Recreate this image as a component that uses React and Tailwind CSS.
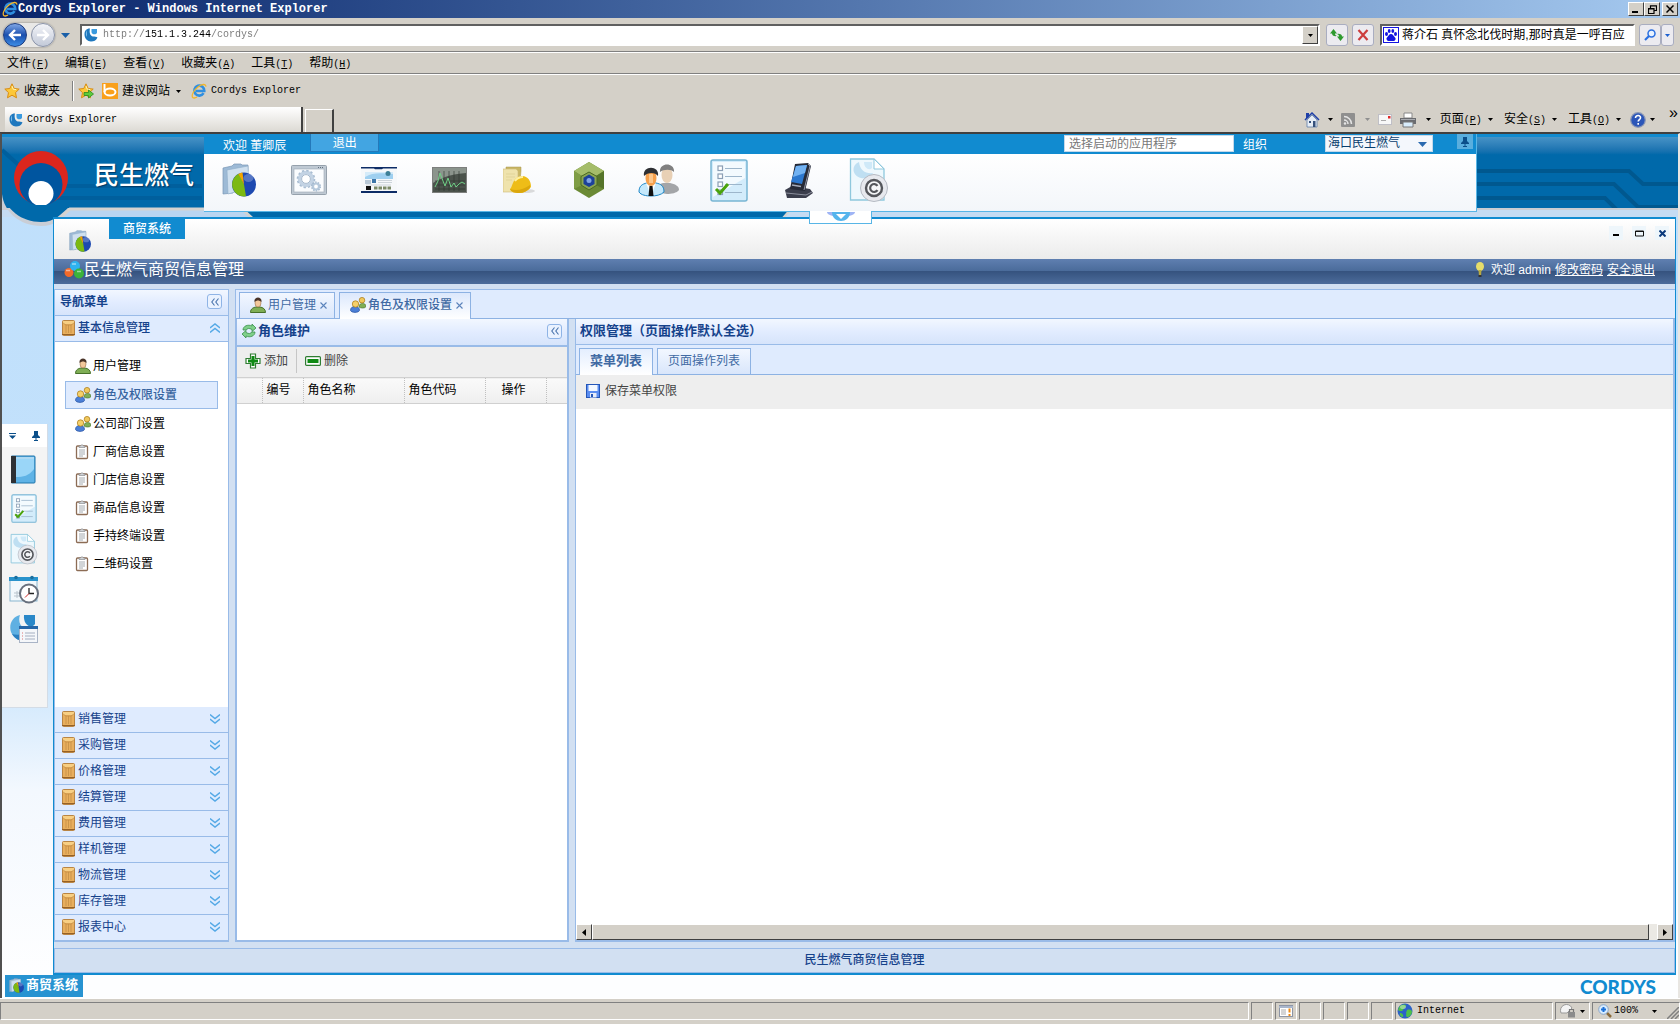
import { useState } from "react";
import clsx from "clsx";

const menus = [
  ["文件", "F"],
  ["编辑", "E"],
  ["查看", "V"],
  ["收藏夹", "A"],
  ["工具", "T"],
  ["帮助", "H"],
];

const navItems = [
  { label: "用户管理", icon: UserIcon },
  { label: "角色及权限设置", icon: UsersIcon },
  { label: "公司部门设置", icon: UsersIcon },
  { label: "厂商信息设置", icon: ClipIcon },
  { label: "门店信息设置", icon: ClipIcon },
  { label: "商品信息设置", icon: ClipIcon },
  { label: "手持终端设置", icon: ClipIcon },
  { label: "二维码设置", icon: ClipIcon },
];

const sections = [
  "销售管理",
  "采购管理",
  "价格管理",
  "结算管理",
  "费用管理",
  "样机管理",
  "物流管理",
  "库存管理",
  "报表中心",
];

const launchers = [
  { name: "folder", icon: <FolderPie className="w-[34px] h-[34px]" /> },
  { name: "settings", icon: <GearWindow /> },
  { name: "portal", icon: <PortalIcon /> },
  { name: "monitor", icon: <MonitorIcon /> },
  { name: "worker", icon: <HelmetIcon /> },
  { name: "hexagon", icon: <HexIcon /> },
  { name: "people", icon: <PeopleIcon /> },
  { name: "checklist", icon: <ChecklistIcon className="w-[38px] h-[43px]" /> },
  { name: "pda", icon: <PdaIcon /> },
  { name: "copyright", icon: <CopyrightIcon className="w-[40px] h-[46px]" /> },
];

/* ---------- small glyphs ---------- */

function Caret({ className = "fill-black" }) {
  return (
    <svg viewBox="0 0 5 3" className={clsx("w-[5px] h-[3px] shrink-0", className)}>
      <path d="M0 0h5L2.5 3z" />
    </svg>
  );
}

function IeIcon() {
  return (
    <svg viewBox="0 0 16 16" className="w-4 h-4 shrink-0">
      <path d="M12.6 10.2A5 5 0 1 1 13.3 8H5" fill="none" stroke="#2f8fe0" strokeWidth="2.6" />
      <path d="M14.8 3.6C15 .8 11 .8 7 4 3 7.200 .6 11.500 1.400 14c.7 1.500 3 1 4.600 0" fill="none" stroke="#f3b62b" strokeWidth="1.400" />
    </svg>
  );
}

function CordysIcon() {
  return (
    <svg viewBox="0 0 14 14" className="w-[14px] h-[14px] shrink-0">
      <path d="M6 .5C2 .5 .5 3 .5 6.500c0 4 3 7 6.500 7 3 0 5-1 6.500-4-1-1-3-1-4.500-1C6 8 5 4 6 .5z" fill="#1f78be" />
      <path d="M3 2C1.500 4 1.500 7 3 9c0-3-.5-5 0-7z" fill="#8cc8f0" />
      <path d="M7.500 1h5.500v3.500C13 7 7.500 7 7.500 4z" fill="#3a9ade" />
    </svg>
  );
}

function StarIcon({ add }) {
  return (
    <svg viewBox="0 0 16 16" className="w-4 h-4 shrink-0">
      <path d="M8 .8l2.200 4.700 5 .6-3.700 3.500 1 5.200L8 12.200l-4.500 2.600 1-5.200L.8 6.100l5-.6z" fill="#fcc83a" stroke="#d98c12" />
      <path d="M8 3l1.200 3.200 3 .4" fill="none" stroke="#fff3b5" />
      {add && <path d="M6 9.500h4.500V7l5 4-5 4v-2.500H6z" fill="#5ccb3d" stroke="#2b8a1c" strokeWidth=".8" />}
    </svg>
  );
}

function Pin({ className }) {
  return (
    <svg viewBox="0 0 8 10" className={clsx("w-2 h-[10px]", className)}>
      <path d="M2 0h4v4l2 2v1H4.500v2H6v1H2V9h1.500V7H0V6l2-2z" fill="#0b4f8a" />
    </svg>
  );
}

function FolderPie({ className }) {
  return (
    <svg viewBox="0 0 34 34" className={className}>
      <path d="M1 5l9-2 2-2h7l1 1h6v6L11 30 1 31z" fill="#9dbad6" stroke="#7897b5" strokeWidth=".7" />
      <path d="M5 7l21-4 1 22-21 6z" fill="#cfe0ef" stroke="#8facc8" strokeWidth=".6" />
      <circle cx="22" cy="21.500" r="12" fill="#1d49b0" />
      <path d="M22 21.500L17 10.600a12 12 0 0 0 7 22.700z" fill="#7cb912" />
      <path d="M22 21.500L16.500 10.900a12 12 0 0 1 4-1.300z" fill="#f5a400" />
      <ellipse cx="26.500" cy="15" rx="5" ry="4" fill="#fff" opacity=".25" />
    </svg>
  );
}

function GearWindow() {
  return (
    <svg viewBox="0 0 36 31" className="w-9 h-[31px]">
      <rect x=".5" y=".5" width="35" height="29" rx="1" fill="#bfc9d3" stroke="#96a1ac" />
      <rect x="3" y="4" width="30" height="23" fill="#fafcfe" stroke="#9aa6b2" strokeWidth=".6" />
      <path d="M27 2.500h6" stroke="#63717f" strokeDasharray="1 1" />
      <circle cx="15" cy="14" r="6.500" fill="none" stroke="#c3d3e4" strokeWidth="3.500" />
      <circle cx="15" cy="14" r="8.500" fill="none" stroke="#a9bdd2" strokeWidth="1.600" strokeDasharray="2.400 2.050" />
      <circle cx="15" cy="14" r="4.400" fill="#fff" stroke="#94aac0" strokeWidth=".8" />
      <circle cx="25" cy="21.500" r="3" fill="#fff" stroke="#b6c9dc" strokeWidth="2.200" />
      <circle cx="25" cy="21.500" r="4.400" fill="none" stroke="#9fb5cb" strokeWidth="1.200" strokeDasharray="1.500 1.260" />
    </svg>
  );
}

function PortalIcon() {
  return (
    <svg viewBox="0 0 36 26" className="w-9 h-[26px]">
      <rect width="36" height="26" fill="#f6f8fa" />
      <path d="M0 0h36v1.500H22l-1 .8h-7l-1-.8H0z" fill="#0d2c66" />
      <path d="M0 24h36v2H0z" fill="#0d2c66" />
      <rect x="4" y="5" width="28" height="7" fill="#9fd0f0" />
      <path d="M4 10c8-5 16-4 28-3v-2H4z" fill="#d5ebf9" />
      <circle cx="27" cy="6.500" r="2.500" fill="#3d7f96" />
      <rect x="4" y="13" width="6" height="4" fill="#b8c8d6" />
      <rect x="11" y="12" width="4" height="4" fill="#3e76a8" />
      <path d="M17 13.500h14M17 15.500h14M5 18h25" stroke="#cdd4da" />
      <rect x="5" y="19" width="5" height="4" fill="#111" />
      <path d="M13 21h17" stroke="#7c8a68" strokeWidth="3" strokeDasharray="3.500 1" />
    </svg>
  );
}

function MonitorIcon() {
  return (
    <svg viewBox="0 0 35 26" className="w-[35px] h-[26px]">
      <rect x=".5" y=".5" width="34" height="25" fill="#4b534c" stroke="#7d7f7d" />
      <path d="M1 1h33v5C22 7 12 9 1 16z" fill="#8b948c" />
      <path d="M3 18h30M3 14h30M3 22h30M7 4v20M12 4v20M17 4v20M22 4v20M27 4v20" stroke="#2b332c" strokeWidth=".6" />
      <path d="M3 20l3-6 2-8 3 8 2 5 3-8 3 9 3-4 2 4 3-3 3-2 3 2" fill="none" stroke="#6fcf86" />
    </svg>
  );
}

function HelmetIcon() {
  return (
    <svg viewBox="0 0 32 28" className="w-8 h-7">
      <path d="M3 1h15v4l-2 20H3z" fill="#c9b766" stroke="#a8964c" strokeWidth=".5" />
      <path d="M0 3h13l2 2v20l-3 1H0z" fill="#efe3ad" stroke="#cdbb75" strokeWidth=".6" />
      <path d="M3 8h9M3 11h9M3 14h6" stroke="#dccd94" strokeWidth=".7" />
      <ellipse cx="22" cy="25" rx="10" ry="2" fill="#d9dadb" />
      <path d="M7 23c3-2 2-12 12-13 6 0 9 5 9 11-3 4-7 6-12 6-4 0-8-1-9-4z" fill="#eebd17" />
      <path d="M7 23c6 2 13 1 20-4v3c-3 3-7 5-11 5-4 0-8-1-9-4z" fill="#dba70c" />
      <path d="M12 15c2-3 5-4 8-4" fill="none" stroke="#fff0a0" strokeWidth="2" />
    </svg>
  );
}

function HexIcon() {
  return (
    <svg viewBox="0 0 30 36" className="w-[30px] h-9">
      <path d="M15 0l15 9v18l-15 9L0 27V9z" fill="#6b8a35" />
      <path d="M15 0l15 9-8 5-7-4-7 4-8-5z" fill="#a5bd6a" />
      <path d="M0 9l8 5v9l-8 4z" fill="#7f9d45" />
      <path d="M30 9l-8 5v9l8 4z" fill="#55742a" />
      <path d="M15 10l8 4.500v8.500l-8 5-8-5v-8.500z" fill="#8aa652" stroke="#4c6a22" />
      <path d="M15 12.500l5.500 3.200v6.200L15 25l-5.500-3.100v-6.200z" fill="#1d4199" />
      <circle cx="15" cy="18.500" r="2.500" fill="#7fa3e8" />
    </svg>
  );
}

function PeopleIcon() {
  return (
    <svg viewBox="0 0 42 33" className="w-[42px] h-[33px]">
      <path d="M17 28c0-6 4-8 8-9h7c5 1 9 3 9 7-2 3-8 4-12 4z" fill="#a3a5a8" />
      <ellipse cx="29" cy="11" rx="5.500" ry="8" fill="#e8d0b5" />
      <path d="M22 8c-1-10 15-10 14 0-3-3-10-3-14 0z" fill="#808080" />
      <path d="M1 28c0-6 3-8 8-9h9c5 1 8 3 8 9-3 3-8 4-13 4S3 31 1 28z" fill="#c4e8fb" stroke="#1d87c8" />
      <path d="M8 19l5 4 5-4-5 13z" fill="#fff" />
      <path d="M11.500 22h3l1 10h-5z" fill="#111" />
      <ellipse cx="13" cy="14" rx="5.500" ry="8" fill="#f6a04c" />
      <path d="M11 10h4v9h-4z" fill="#ffd7a8" opacity=".7" />
      <path d="M6 12C4 1 22 1 20 12c-3-4-10-4-14 0z" fill="#2d2f33" />
    </svg>
  );
}

function ChecklistIcon({ className }) {
  return (
    <svg viewBox="0 0 38 43" className={className}>
      <rect x="1" y="1" width="36" height="41" rx="2" fill="#d3ecfb" stroke="#78b5d3" strokeWidth="1.500" />
      <path d="M3 3h32v16L3 38z" fill="#f3fafe" />
      <g fill="#fff" stroke="#8b9fb5" strokeWidth="1.200">
        <rect x="8" y="7" width="4.500" height="4.500" />
        <rect x="8" y="15" width="4.500" height="4.500" />
        <rect x="8" y="23" width="4.500" height="4.500" />
        <rect x="8" y="31" width="4.500" height="4.500" />
      </g>
      <path d="M15 9.500h17M15 17.500h17M15 25.500h17M15 33.500h17" stroke="#9db6cb" strokeWidth="1.200" />
      <path d="M6 30l4 4 8-9" fill="none" stroke="#4aa40c" strokeWidth="3" />
    </svg>
  );
}

function PdaIcon() {
  return (
    <svg viewBox="0 0 30 35" className="w-[30px] h-[35px]">
      <path d="M1 27l7-4 18 3 3 4-7 5H3z" fill="#3b3e4c" />
      <path d="M2 30l20 2 6-3" fill="none" stroke="#8b8f9c" />
      <path d="M11 1l13-1 3 3-6 25-15-2z" fill="#262a36" />
      <path d="M12 3l11-1-5 19-11-2z" fill="#2c78cf" />
      <path d="M12 3l11-1-2 8-12 4z" fill="#72b2f2" />
      <path d="M8 22l9 1.500" stroke="#a3a9b8" strokeWidth="1.500" />
      <path d="M24 1l2 2-6 24" fill="none" stroke="#9297a8" />
    </svg>
  );
}

function CopyrightIcon({ className }) {
  return (
    <svg viewBox="0 0 40 46" className={className}>
      <path d="M1.500 2H25l10 10v31H1.500z" fill="#eef8fd" stroke="#8fc8dd" strokeWidth="1.300" />
      <path d="M25 2v10h10z" fill="#fff" stroke="#8fc8dd" />
      <path d="M10 5c-8 3-7 14 2 16 5 1 10-1 12-5-7 1-13-2-14-11z" fill="#bfdff2" />
      <path d="M15 5h8v6c-3 3-8 0-8-6z" fill="#cfe9f8" />
      <circle cx="25" cy="31" r="13.500" fill="#e7e9ee" stroke="#b6bac3" />
      <circle cx="25" cy="31" r="8" fill="#f5f6f8" stroke="#55575c" strokeWidth="2.400" />
      <path d="M28.500 28.800a4 4 0 1 0 0 4.400" fill="none" stroke="#55575c" strokeWidth="2.200" />
    </svg>
  );
}

function BookIcon() {
  return (
    <svg viewBox="0 0 25 29" className="w-[25px] h-[29px]">
      <rect x="0" y="1" width="24" height="27" rx="1" fill="#5fb3e6" stroke="#1e75ab" />
      <path d="M5 4h18v10c-5 7-11 8-18 8z" fill="#9ad6f8" />
      <path d="M0 1h5v27H0z" fill="#2d3034" />
      <path d="M5 3h18" stroke="#fff" />
    </svg>
  );
}

function CalendarIcon() {
  return (
    <svg viewBox="0 0 30 29" className="w-[30px] h-[29px]">
      <rect x="1" y="3" width="27" height="23" fill="#f2f8fc" stroke="#8ab6cf" />
      <path d="M0 2h29v4H0z" fill="#2a93cc" />
      <circle cx="7" cy="2.500" r="1.800" fill="#1a6f9f" />
      <circle cx="23" cy="2.500" r="1.800" fill="#1a6f9f" />
      <path d="M5 18h8M5 21h8M8 16v7" stroke="#b8c3cc" />
      <circle cx="20" cy="18.500" r="9" fill="#fff" stroke="#68707d" strokeWidth="2" />
      <path d="M20 13v5.500h5" fill="none" stroke="#222" strokeWidth="1.300" />
      <path d="M20 18.500l-4 4" stroke="#d02a2a" />
    </svg>
  );
}

function CordysDocIcon() {
  return (
    <svg viewBox="0 0 30 31" className="w-[30px] h-[31px]">
      <path d="M11 1C2 3-1 13 3 20c3 5 8 7 12 7V14c-4-2-6-7-4-13z" fill="#5fb0e2" />
      <path d="M3 20c3 5 8 7 12 7v-7c-5 1-9 1-12 0z" fill="#2b7fc0" />
      <path d="M15 1h11v9c-3 5-12 2-11-9z" fill="#2b88c8" />
      <rect x="10.500" y="12.500" width="18" height="16" fill="#f5f7fa" stroke="#a9b4c6" />
      <path d="M10 12h19v3H10z" fill="#2767a8" />
      <path d="M16 19h10M16 22h10M16 25h10" stroke="#a4aec0" />
      <path d="M13 19h1M13 22h1M13 25h1" stroke="#d77" />
    </svg>
  );
}

function UserIcon() {
  return (
    <svg viewBox="0 0 16 16" className="w-4 h-4 shrink-0">
      <path d="M.5 15.500c0-4 3-5 5.500-5.500h4c3 .5 5.500 2 5.500 5.500z" fill="#7fae55" stroke="#46702a" />
      <ellipse cx="8" cy="6" rx="3" ry="4" fill="#f3c89b" stroke="#9b6e43" strokeWidth=".6" />
      <path d="M4.500 5C3.500-1 12.500-1 11.500 5c-2-2-5-2-7 0z" fill="#4a3428" />
    </svg>
  );
}

function UsersIcon() {
  return (
    <svg viewBox="0 0 16 16" className="w-4 h-4 shrink-0">
      <path d="M9 10c0-3 2-3.500 3.500-3.500S16 7 16 9.500c-1 2-5 2-7 .5z" fill="#7fae55" stroke="#46702a" strokeWidth=".6" />
      <circle cx="12" cy="3.200" r="2.800" fill="#f0c85c" stroke="#a87713" strokeWidth=".7" />
      <path d="M.5 13.500c0-3 2-4 4.500-4s4.500 1 4.500 4c-1 2.500-8 2.500-9 0z" fill="#4b7fd6" stroke="#234f9f" strokeWidth=".7" />
      <circle cx="5.500" cy="7" r="3.200" fill="#f5d06a" stroke="#a87713" strokeWidth=".7" />
    </svg>
  );
}

function ClipIcon() {
  return (
    <svg viewBox="0 0 16 16" className="w-4 h-4 shrink-0">
      <rect x="1.500" y="2" width="11" height="12.500" rx="1" fill="#fff" stroke="#8c6c55" strokeWidth="1.300" />
      <path d="M4 3.500V2h1.500l1.500-1.500 1.500 1.500H10v1.500z" fill="#cfd3d6" stroke="#808285" strokeWidth=".6" />
      <path d="M4 6h6M4 8h6M4 10h6M4 12h4" stroke="#9aa0a6" strokeWidth=".9" />
    </svg>
  );
}

function FolderTan() {
  return (
    <svg viewBox="0 0 13 16" className="w-[13px] h-4 shrink-0">
      <rect x=".5" y=".5" width="12" height="15" rx="1" fill="#e8ae5c" stroke="#b98544" />
      <path d="M1 1h11v3H1z" fill="#f8cf83" />
      <path d="M1 3l3 2h5l3-2M6.500 5v8M4 5v8M9 5v8" fill="none" stroke="#bf8a42" strokeWidth=".7" />
      <path d="M0 14.500h13" stroke="#966126" />
    </svg>
  );
}

function Chevrons({ up }) {
  return (
    <svg viewBox="0 0 10 10" className={clsx("w-[10px] h-[10px]", up && "rotate-180")}>
      <path d="M0 .5l5 4 5-4M0 5l5 4 5-4" fill="none" stroke="#55a9e6" strokeWidth="1.400" />
    </svg>
  );
}

function CollapseButton() {
  return (
    <button aria-label="collapse" className="grid place-items-center w-[15px] h-[15px] rounded-[3px] border border-[#8fb4e6] bg-[#eaf2ff]">
      <svg viewBox="0 0 8 8" className="w-2 h-2">
        <path d="M3.500 0.500L.8 4l2.700 3.500M7.500 .5L4.800 4l2.700 3.500" fill="none" stroke="#4a74ad" strokeWidth="1.100" />
      </svg>
    </button>
  );
}

function Latin({ children, className }) {
  return <span className={clsx("font-['Liberation_Mono',monospace] text-[10px]", className)}>{children}</span>;
}

function MenuLabel({ text, hotkey }) {
  return (
    <>
      {text}
      <Latin>
        (<u>{hotkey}</u>)
      </Latin>
    </>
  );
}

const bevel = "bg-[#d4d0c8] border border-t-white border-l-white border-r-[#404040] border-b-[#404040]";
const navButton = "grid place-items-center h-[22px] rounded-[3px] border border-[#a9adc0] bg-[#ecebf0]";

/* ---------- browser chrome ---------- */

function BrowserChrome() {
  return (
    <div className="bg-[#d4d0c8]">
      <div className="flex items-center h-[18px] pl-0.5 pr-0.5 bg-linear-to-r from-[#0a246a] to-[#a6caf0]">
        <IeIcon />
        <span className="flex-1 font-['Liberation_Mono',monospace] font-bold text-xs text-white">
          Cordys Explorer - Windows Internet Explorer
        </span>
        <button aria-label="minimize" className={clsx("grid place-items-center w-4 h-[14px]", bevel)}>
          <svg viewBox="0 0 8 8" className="w-2 h-2"><path d="M0 7h6" stroke="#000" strokeWidth="2" /></svg>
        </button>
        <button aria-label="restore" className={clsx("grid place-items-center w-4 h-[14px]", bevel)}>
          <svg viewBox="0 0 9 9" className="w-[9px] h-[9px]">
            <path d="M2.500 3V.8h6v4.700H6.500M.5 3.500h5.500v5H.5zM.5 4h5.500" fill="none" stroke="#000" strokeWidth="1.200" />
          </svg>
        </button>
        <button aria-label="close" className={clsx("grid place-items-center ml-0.5 w-4 h-[14px]", bevel)}>
          <svg viewBox="0 0 8 8" className="w-2 h-2"><path d="M.5.5l7 7M7.500.5l-7 7" stroke="#000" strokeWidth="1.500" /></svg>
        </button>
      </div>

      <div className="flex items-center h-[35px] pl-[3px] pr-[6px] border-b border-white shadow-[inset_0_-1px_0_#808080]">
        <div className="flex gap-1 rounded-full bg-[#e9e8e6] shadow-[0_0_2px_#777]">
          <button aria-label="back" className="grid place-items-center w-6 h-6 rounded-full border border-[#1b3a7c] bg-linear-to-b from-[#7fa6e6] via-[#1a4fae] to-[#3f8ee6]">
            <svg viewBox="0 0 14 12" className="w-[14px] h-3"><path d="M13 6H2M7 1L2 6l5 5" fill="none" stroke="#fff" strokeWidth="2.400" /></svg>
          </button>
          <button aria-label="forward" className="grid place-items-center w-6 h-6 rounded-full border border-[#8a93a8] bg-linear-to-b from-[#f3f4f8] to-[#c3cad9]">
            <svg viewBox="0 0 14 12" className="w-[14px] h-3"><path d="M1 6h11M7 1l5 5-5 5" fill="none" stroke="#fff" strokeWidth="2.400" /></svg>
          </button>
        </div>
        <svg viewBox="0 0 9 5" className="ml-1.5 w-[9px] h-[5px]"><path d="M0 0h9L4.500 5z" fill="#1a5fa8" /></svg>
        <div className="flex flex-1 items-center h-[22px] ml-[10px] pl-0.5 bg-white border-2 border-t-[#606060] border-l-[#606060] border-r-white border-b-white">
          <CordysIcon />
          <input
            aria-label="address"
            defaultValue="http://151.1.3.244/cordys/"
            className="flex-1 ml-[5px] outline-none font-['Liberation_Mono',monospace] text-[10px] text-transparent bg-clip-text bg-[linear-gradient(90deg,#777_42px,#000_42px,#000_108px,#777_108px)]"
          />
          <button aria-label="history" className={clsx("grid place-items-center w-4 h-[18px]", bevel)}>
            <Caret />
          </button>
        </div>
        <button aria-label="refresh" className={clsx("ml-1.5 w-[22px]", navButton)}>
          <svg viewBox="0 0 14 12" className="w-[14px] h-3">
            <path d="M0 4.500L3.500 0 7 4.500H5c0 1 .5 2 2 2.500-3 .5-5-.5-5-2.500z" fill="#2e9a2e" />
            <path d="M14 7.500L10.500 12 7 7.500h2c0-1-.5-2-2-2.500 3-.5 5 .5 5 2.500z" fill="#2e9a2e" />
          </svg>
        </button>
        <button aria-label="stop" className={clsx("ml-1 w-[22px]", navButton)}>
          <svg viewBox="0 0 12 12" className="w-3 h-3"><path d="M1.500 1l9 10M10.500 1l-9 10" stroke="#cc3d3d" strokeWidth="2.200" /></svg>
        </button>
        <div className="flex items-center w-[255px] h-[22px] ml-1.5 pl-px bg-white border-2 border-t-[#606060] border-l-[#606060] border-r-white border-b-white">
          <svg viewBox="0 0 16 16" className="w-4 h-4 shrink-0">
            <rect x=".5" y=".5" width="15" height="15" fill="#fff" stroke="#1414e0" />
            <g fill="#1414e0">
              <ellipse cx="3.500" cy="7" rx="1.500" ry="2" />
              <ellipse cx="6.200" cy="4" rx="1.400" ry="2" />
              <ellipse cx="9.800" cy="4" rx="1.400" ry="2" />
              <ellipse cx="12.500" cy="7" rx="1.500" ry="2" />
              <path d="M8 7c2 0 2.500 2 4 3.500s0 3.500-1.500 3.500-4 0-5 0-3-2-1.500-3.500S6 7 8 7z" />
            </g>
          </svg>
          <input
            aria-label="search"
            defaultValue="蒋介石 真怀念北伐时期,那时真是一呼百应"
            className="flex-1 min-w-0 ml-[3px] outline-none text-xs"
          />
        </div>
        <button aria-label="find" className={clsx("ml-1 w-[22px]", navButton)}>
          <svg viewBox="0 0 12 12" className="w-3 h-3">
            <circle cx="7.500" cy="4.500" r="3.500" fill="#e8f2ff" stroke="#2a6fe0" strokeWidth="1.500" />
            <path d="M5 7L1 11" stroke="#2a6fe0" strokeWidth="2.200" />
          </svg>
        </button>
        <button aria-label="search options" className={clsx("w-[13px]", navButton)}>
          <Caret className="fill-[#1c60d0]" />
        </button>
      </div>

      <nav className="flex items-center gap-4 h-[22px] pl-[7px] text-xs border-b border-white shadow-[inset_0_-1px_0_#808080]">
        {menus.map(([text, hotkey]) => (
          <button key={text}>
            <MenuLabel text={text} hotkey={hotkey} />
          </button>
        ))}
      </nav>

      <div className="flex items-center h-8 pl-1 text-xs">
        <button className="flex items-center gap-1">
          <StarIcon />
          收藏夹
        </button>
        <div className="w-0.5 h-5 ml-3 mr-1 border-l border-[#808080] bg-white" />
        <button aria-label="add favorite"><StarIcon add /></button>
        <button className="flex items-center ml-2">
          <svg viewBox="0 0 16 16" className="w-4 h-4 mr-1">
            <rect width="16" height="16" fill="#f9a01b" />
            <path d="M2.500 1v8" stroke="#fff" strokeWidth="2" />
            <ellipse cx="8" cy="9" rx="5.500" ry="3.500" fill="none" stroke="#fff" strokeWidth="2" />
          </svg>
          建议网站
          <Caret className="ml-1.5 fill-black" />
        </button>
        <button className="flex items-center gap-1 ml-[10px]">
          <IeIcon />
          <Latin>Cordys Explorer</Latin>
        </button>
      </div>

      <div className="flex items-center h-[26px] pl-[5px] text-xs border-b border-[#404040]">
        <div className="flex self-stretch items-center gap-1 w-[298px] pl-1 bg-linear-to-b from-white to-[#dcd9d3] border-r-2 border-[#404040]">
          <CordysIcon />
          <Latin>Cordys Explorer</Latin>
        </div>
        <div className="self-end w-[29px] h-[23px] ml-0.5 border border-white border-r-2 border-r-[#404040] border-b-0" />
        <div className="flex-1" />
        <button className="flex items-center gap-2">
          <svg viewBox="0 0 16 16" className="w-4 h-4">
            <path d="M1 8l7-7 7 7" fill="none" stroke="#1e3fa8" strokeWidth="1.500" />
            <path d="M2 1h3v4L2 7z" fill="#1e3fa8" />
            <path d="M3 8l5-5 5 5v7H3z" fill="#e6edf6" stroke="#5f7fa8" strokeWidth=".8" />
            <path d="M5 9h2v2H5zM9 9h2.500v6H9z" fill="#35517c" />
          </svg>
          <Caret />
        </button>
        <button className="flex items-center gap-2.5 ml-2">
          <svg viewBox="0 0 14 14" className="w-[14px] h-[14px]">
            <rect width="14" height="14" rx="1" fill="#8f8f8f" />
            <path d="M3 7a4 4 0 0 1 4 4M3 3.500a7.500 7.500 0 0 1 7.500 7.500" fill="none" stroke="#e5e5e5" strokeWidth="1.500" />
            <circle cx="4" cy="10.500" r="1.200" fill="#e5e5e5" />
          </svg>
          <Caret className="fill-[#8f8f8f]" />
        </button>
        <button aria-label="mail" className="ml-2">
          <svg viewBox="0 0 14 11" className="w-[14px] h-[11px]">
            <rect x=".5" y=".5" width="13" height="10" fill="#f8f8f8" stroke="#bfbfc6" />
            <path d="M10 2h2.500v2.500H10z" fill="#e02828" />
            <path d="M3 6.500h5" stroke="#aaa" />
          </svg>
        </button>
        <button className="flex items-center gap-2.5 ml-2">
          <svg viewBox="0 0 16 16" className="w-4 h-4">
            <path d="M4 1h8v5H4z" fill="#fff" stroke="#888" />
            <path d="M0 6h16v6H0z" fill="#6a6c70" />
            <path d="M3 10h10v5H3z" fill="#d8ecfb" stroke="#777" />
            <path d="M1 7.500h14" stroke="#a9abb0" />
          </svg>
          <Caret />
        </button>
        <button className="flex items-center gap-1.5 ml-[9px]">
          <span><MenuLabel text="页面" hotkey="P" /></span>
          <Caret />
        </button>
        <button className="flex items-center gap-1.5 ml-[11px]">
          <span><MenuLabel text="安全" hotkey="S" /></span>
          <Caret />
        </button>
        <button className="flex items-center gap-1.5 ml-[11px]">
          <span><MenuLabel text="工具" hotkey="O" /></span>
          <Caret />
        </button>
        <button className="flex items-center gap-1 ml-[9px]">
          <svg viewBox="0 0 16 16" className="w-4 h-4">
            <circle cx="8" cy="8" r="7.300" fill="#2c56b8" stroke="#8d99b5" strokeWidth="1.200" />
            <path d="M5.500 6c0-3.500 5.500-3 5 0-.2 1.500-2.300 1.800-2.300 3.500M8.200 11v1.800" fill="none" stroke="#fff" strokeWidth="1.600" />
          </svg>
          <Caret />
        </button>
        <button className="self-start ml-3 w-[13px] leading-3 text-base">»</button>
      </div>
    </div>
  );
}

/* ---------- portal header ---------- */

function PortalHeader() {
  return (
    <header className="relative h-[83px] bg-[#c5dcf3]">
      <div className="absolute inset-x-0 top-0 h-[76px] border-t-[3px] border-[#118bd0] border-b-2 border-b-[#c9ccd2] bg-linear-to-b from-[#4793c6] from-0% via-[#0069aa] via-25% to-[#0069aa]" />
      {/* curved edge of the banner */}
      <svg viewBox="0 0 800 92" className="absolute left-0 top-0 w-[800px] h-[92px]">
        <path d="M240 75h548l-8 10H250z" fill="#0069aa" />
        <path d="M788 76l-7 8" stroke="#d5d3d0" strokeWidth="2" />
        <path d="M0 60C2 78 18 92 39 92c14 0 22-7 28-17H0z" fill="#c9ced6" />
        <path d="M0 56C3 76 20 88 39 88c14 0 20-8 28-15V50H0z" fill="#0069aa" />
        <path d="M60 84l9-9h171l10 9z" fill="#b9d5f1" />
        <path d="M58 84l10-9h172l10 9" fill="none" stroke="#d5d3d0" strokeWidth="3" />
        <path d="M0 16l40 36h160M40 64h160" fill="none" stroke="#005f9d" strokeWidth="4" />
      </svg>
      <svg viewBox="0 0 201 58" className="absolute right-0 top-4 w-[201px] h-[58px]">
        <path d="M0 21h152l14 13h35M0 34h137l24 23h40M0 48h128l12 12" fill="none" stroke="#00588f" strokeWidth="4" />
      </svg>

      <div className="relative z-20 flex h-[78px]">
        <div className="flex items-start w-[202px] pl-3 pt-[17px]">
          <svg viewBox="0 0 54 54" className="w-[54px] h-[54px] shrink-0">
            <circle cx="27" cy="27" r="27" fill="#db261d" />
            <circle cx="27" cy="33.500" r="21.500" fill="#00559f" />
            <circle cx="27" cy="42.500" r="12.500" fill="#fff" />
          </svg>
          <div className="ml-[26px] pt-1 text-[25px] leading-10 font-medium text-white whitespace-nowrap [text-shadow:1px_1px_1px_#003a66]">民生燃气</div>
        </div>
        <div className="flex-1 flex flex-col min-w-0 border-b border-r border-[#58b5e6]">
          <div className="flex h-5 bg-[#118bd0] text-xs text-white">
            <span className="ml-[19px] leading-6">欢迎 董卿辰</span>
            <button className="ml-6 w-[69px] h-[18px] leading-4 border border-t-0 border-[#2479ba] bg-[#42a5e2]">退出</button>
            <div className="flex-1" />
            <input
              aria-label="launcher"
              placeholder="选择启动的应用程序"
              className="w-[170px] h-[17px] mt-px px-1 bg-white placeholder:text-[#777] outline-none border border-[#c5d9ea]"
            />
            <label htmlFor="org" className="ml-[9px] mr-[58px] leading-[22px]">组织</label>
            <div className="relative h-[17px] mt-px">
              <select id="org" className="appearance-none block w-[108px] h-[17px] pl-0.5 leading-[15px] bg-[#f4f7fc] border border-[#c5d9ea] text-[#073d6e]">
                <option>海口民生燃气</option>
              </select>
              <svg viewBox="0 0 9 5" className="absolute right-[6px] top-[7px] w-[9px] h-[5px] pointer-events-none"><path d="M0 0h9L4.500 5z" fill="#2a6ab0" /></svg>
            </div>
            <button aria-label="pin" className="grid place-items-center w-4 h-[15px] ml-6 mr-[3px] bg-[#59aede]"><Pin /></button>
          </div>
          <div className="flex-1 flex items-start bg-linear-to-b from-white to-[#f3f6fa]">
            {launchers.map((l) => (
              <button key={l.name} aria-label={l.name} className="grid place-items-center w-[70px] h-[52px]">
                {l.icon}
              </button>
            ))}
          </div>
        </div>
        <div className="w-[201px]" />
      </div>

      <button aria-label="expand" className="absolute z-20 left-1/2 -ml-[31px] top-[77px] w-[63px] h-[13px] bg-white border border-t-0 border-[#58b5e6]">
        <svg viewBox="0 0 30 10" className="mx-auto w-[30px] h-[10px]">
          <ellipse cx="15" cy="0" rx="14" ry="5" fill="#9fb4f5" />
          <path d="M6 0h18c0 12-18 12-18 0z" fill="#55b4ec" />
          <path d="M10 2h10l-5 5z" fill="#fff" />
        </svg>
      </button>
    </header>
  );
}

function Dock() {
  return (
    <div className="flex flex-col w-[46px] h-[284px] mt-[207px] bg-[#f4f4f4] border-r border-b border-[#d3dce6]">
      <div className="flex items-center justify-between h-[23px] px-[7px] bg-white">
        <button aria-label="menu">
          <svg viewBox="0 0 7 6" className="w-[7px] h-1.5"><path d="M0 0h7v1H0zM0 2.500h7L3.500 6z" fill="#0b4f8a" /></svg>
        </button>
        <button aria-label="pin"><Pin /></button>
      </div>
      <div className="flex flex-col items-center justify-between h-[198px] pt-2 pr-0.5">
        <button aria-label="notebook"><BookIcon /></button>
        <button aria-label="tasks"><ChecklistIcon className="w-[26px] h-[29px]" /></button>
        <button aria-label="copyright"><CopyrightIcon className="w-[28px] h-[32px]" /></button>
        <button aria-label="calendar"><CalendarIcon /></button>
        <button aria-label="documents"><CordysDocIcon /></button>
      </div>
    </div>
  );
}

/* ---------- application window ---------- */

const panelHead = "flex items-center justify-between bg-linear-to-b from-[#f2f7ff] via-[#e2ecff] to-[#d6e4fb]";

function SideNav({ selected, onSelect }) {
  return (
    <nav className="flex flex-col w-[175px] bg-white border border-[#99bbe8] text-xs">
      <div className={clsx("h-[26px] pl-[5px] pr-1.5 pb-0.5 border-b border-[#99bbe8] font-bold text-[#15428b]", panelHead)}>
        导航菜单
        <CollapseButton />
      </div>
      <button className="flex items-center h-[26px] pl-[7px] pr-2 pb-0.5 gap-[3px] bg-[#dfebfe] border-b border-[#99bbe8] text-[#15428b] font-medium">
        <FolderTan />
        <span className="flex-1 text-left">基本信息管理</span>
        <Chevrons up />
      </button>
      <ul className="flex-1 pt-2.5 px-[10px]">
        {navItems.map(({ label, icon: Icon }) => (
          <li key={label} className={label.includes("部门") || label.includes("角色") ? "mt-px" : ""}>
            <button
              onClick={() => onSelect(label)}
              className={clsx(
                "flex items-center gap-0.5 w-full h-7 pl-[9px] border",
                selected === label ? "bg-[#dfebfe] border-[#99bbe8] text-[#3764a0] font-medium" : "border-transparent text-black"
              )}
            >
              <Icon />
              {label}
            </button>
          </li>
        ))}
      </ul>
      {sections.map((name) => (
        <button key={name} className="flex items-center h-[26px] pl-[7px] pr-2 pb-px gap-[3px] bg-[#dfebfe] border-b border-[#99bbe8] text-[#15428b]">
          <FolderTan />
          <span className="flex-1 text-left">{name}</span>
          <Chevrons />
        </button>
      ))}
    </nav>
  );
}

function CloseX() {
  return (
    <svg viewBox="0 0 7 7" className="w-[7px] h-[7px] ml-0.5"><path d="M.5.500l6 6M6.500.5l-6 6" stroke="#5b83bb" strokeWidth="1.100" /></svg>
  );
}

function RolePanel() {
  return (
    <section className="flex flex-col w-[333px] bg-white border-2 border-l border-[#99bbe8] border-t-0">
      <div className={clsx("h-7 pl-1 pr-[5px] pb-0.5 border-b-2 border-[#99bbe8]", panelHead)}>
        <h2 className="flex items-center gap-px text-[13px] font-bold text-[#15428b]">
          <svg viewBox="0 0 16 16" className="w-4 h-4">
            <path d="M2 7c0-4 5-6 9-4V1l4 4-4 3.500V6.500C8 5 6 5 5.500 7z" fill="#7fd08a" stroke="#3a8f4a" strokeWidth=".8" />
            <path d="M14 9c0 4-5 6-9 4v2l-4-4 4-3.500v2c3 1.500 5 1.500 5.500-.5z" fill="#7fd08a" stroke="#3a8f4a" strokeWidth=".8" />
          </svg>
          角色维护
        </h2>
        <CollapseButton />
      </div>
      <div className="flex items-center h-[30px] pl-2 pb-0.5 bg-[#eee] text-xs text-[#444]">
        <button className="flex items-center gap-[3px]">
          <svg viewBox="0 0 16 16" className="w-4 h-4">
            <path d="M5.500 1h5v4.500H15v5h-4.500V15h-5v-4.500H1v-5h4.500z" fill="#fff" stroke="#2f7d32" strokeWidth="1.200" />
            <path d="M6.500 3h3v3.500H13v3H9.500V13h-3V9.500H3v-3h3.500z" fill="#0f8a14" />
          </svg>
          添加
        </button>
        <div className="w-px h-6 mx-2 bg-[#c6c6c6]" />
        <button className="flex items-center gap-[3px]">
          <svg viewBox="0 0 16 10" className="w-4 h-[10px]">
            <rect x=".6" y=".6" width="14.800" height="8.800" rx="1" fill="#fff" stroke="#2f7d32" strokeWidth="1.200" />
            <path d="M2.500 3h11v4h-11z" fill="#0f8a14" />
          </svg>
          删除
        </button>
      </div>
      <table className="w-full table-fixed text-xs text-black">
        <thead>
          <tr className="h-[26px] bg-linear-to-b from-[#fafafa] to-[#efefef] border-y border-[#d0d0d0] [&>th]:font-normal [&>th]:text-left [&>th]:pl-1 [&>th]:pb-px [&>th]:border-r [&>th]:border-dotted [&>th]:border-r-[#c0c0c0] [&>th:last-child]:border-r-0">
            <th className="w-[25px]" aria-label="row" />
            <th className="w-[41px]">编号</th>
            <th className="w-[101px]">角色名称</th>
            <th className="w-[81px]">角色代码</th>
            <th className="w-[61px]"><span className="pl-3">操作</span></th>
            <th />
          </tr>
        </thead>
      </table>
    </section>
  );
}

function PermissionPanel() {
  return (
    <section className="flex-1 flex flex-col min-w-0 bg-white border-l border-r-2 border-b-2 border-[#99bbe8]">
      <div className={clsx("h-[26px] pl-1 pb-0.5 border-b border-[#99bbe8]", panelHead)}>
        <h2 className="text-[13px] font-bold text-[#15428b]">权限管理（页面操作默认全选）</h2>
      </div>
      <div role="tablist" className="flex items-end gap-1 h-[30px] pl-[3px] bg-[#dfebfe] border-b border-[#8db2e3] text-[#416aa3]">
        <button role="tab" aria-selected="true" className="relative -mb-px w-[74px] h-[27px] pb-0.5 border border-b-0 border-[#8db2e3] bg-linear-to-b from-[#e4eefe] to-white text-[13px] font-bold">
          菜单列表
        </button>
        <button role="tab" aria-selected="false" className="w-[94px] h-[26px] pb-0.5 border border-b-0 border-[#8db2e3] bg-linear-to-b from-[#f2f7ff] to-[#d9e6fb] text-xs">
          页面操作列表
        </button>
      </div>
      <div className="flex items-center h-[34px] pl-[10px] pb-0.5 bg-[#eee] text-xs text-[#444]">
        <button className="flex items-center gap-[5px]">
          <svg viewBox="0 0 14 14" className="w-[14px] h-[14px]">
            <rect x=".5" y=".5" width="13" height="13" fill="#5b8df0" stroke="#2456b8" />
            <path d="M2.500 1h9v6h-9z" fill="#f3f8ff" />
            <path d="M4 9h6.500v4.500H4z" fill="#e8edf8" />
            <path d="M5 10h2v3H5z" fill="#2456b8" />
          </svg>
          保存菜单权限
        </button>
      </div>
      <div className="flex-1" />
      <div className="flex h-4 bg-[#ebe9e4]">
        <button aria-label="scroll left" className={clsx("grid place-items-center w-4", bevel)}>
          <svg viewBox="0 0 4 7" className="w-1 h-[7px]"><path d="M4 0v7L0 3.500z" /></svg>
        </button>
        <div className={clsx("flex-1 mr-2", bevel)} />
        <button aria-label="scroll right" className={clsx("grid place-items-center w-4", bevel)}>
          <svg viewBox="0 0 4 7" className="w-1 h-[7px]"><path d="M0 0v7l4-3.500z" /></svg>
        </button>
      </div>
    </section>
  );
}

function AppWindow() {
  const [selected, setSelected] = useState("角色及权限设置");

  return (
    <div className="relative z-10 flex-1 flex flex-col min-w-0 ml-[5px] mr-0.5 border border-t-2 border-b-2 border-[#118bd0] bg-[#d2e0f2]">
      <div className="flex items-start h-10 pl-[15px] pr-1.5 bg-linear-to-b from-white to-[#ebebeb]">
        <FolderPie className="w-[22px] h-[22px] mt-[11px]" />
        <div className="ml-[18px] w-[76px] h-5 bg-[#118bd0] text-center text-xs leading-5 font-medium text-white">商贸系统</div>
        <div className="flex-1" />
        <div className="flex gap-[9px] mt-[7px]">
          <button aria-label="minimize window" className="grid place-items-center w-[14px] h-[14px] bg-[#eef6fb]">
            <svg viewBox="0 0 8 8" className="w-2 h-2"><path d="M1 6h6" stroke="#000" strokeWidth="2" /></svg>
          </button>
          <button aria-label="maximize window" className="grid place-items-center w-[14px] h-[14px] bg-[#eef6fb]">
            <svg viewBox="0 0 9 7" className="w-[9px] h-[7px]"><path d="M.5 1h8v5h-8zM0 1.500h9" fill="none" stroke="#111" strokeWidth="1" /></svg>
          </button>
          <button aria-label="close window" className="grid place-items-center w-[14px] h-[14px] bg-[#eef6fb]">
            <svg viewBox="0 0 7 7" className="w-[7px] h-[7px]"><path d="M.5.5l6 6M6.500.5l-6 6" stroke="#0a3a7c" strokeWidth="2" /></svg>
          </button>
        </div>
      </div>

      <div className="flex items-center h-[25px] pl-[10px] pr-5 pb-1 text-white bg-[linear-gradient(#5f7fb0,#4a6b9a_48%,#35527e_48%,#4c6c9b)]">
        <svg viewBox="0 0 20 18" className="w-5 h-[18px]">
          <circle cx="5" cy="11.500" r="4.500" fill="#f26a2a" />
          <circle cx="11" cy="5" r="5" fill="#2fb3f0" />
          <circle cx="15" cy="12.500" r="5" fill="#3cb33a" />
          <path d="M2 9.500h4M8 3h4M13 10.500h4" stroke="#fff" strokeWidth="1.500" opacity=".5" />
        </svg>
        <h1 className="flex-1 text-base leading-5">民生燃气商贸信息管理</h1>
        <svg viewBox="0 0 10 16" className="w-[10px] h-4 mr-1.5">
          <ellipse cx="5" cy="4.500" rx="4" ry="4.500" fill="#e6dd6a" />
          <path d="M3.500 8h3l-.5 6H4z" fill="#b7a942" />
          <path d="M3.500 13h3v2h-3z" fill="#333" />
        </svg>
        <div className="flex gap-1 text-xs">
          <span>欢迎 admin</span>
          <a href="#password" className="underline">修改密码</a>
          <a href="#logout" className="underline">安全退出</a>
        </div>
      </div>

      <div className="flex-1 flex gap-1.5 pt-[5px] pb-1.5">
        <SideNav selected={selected} onSelect={setSelected} />
        <main className="flex-1 flex flex-col min-w-0 border-l border-t border-[#99bbe8]">
          <div role="tablist" className="flex items-end gap-1 h-[29px] pl-[3px] bg-[#dfebfe] border-b border-[#8db2e3] text-xs text-[#416aa3]">
            <button role="tab" aria-selected="false" className="flex items-center gap-0.5 h-[26px] w-24 pl-[10px] pb-px border border-b-0 border-[#8db2e3] bg-linear-to-b from-[#f2f7ff] to-[#d9e6fb]">
              <UserIcon />
              用户管理
              <CloseX />
            </button>
            <button role="tab" aria-selected="true" className="relative -mb-px flex items-center gap-0.5 h-[27px] w-[132px] pl-[10px] pb-0.5 border border-b-0 border-[#8db2e3] bg-linear-to-b from-[#dce8fc] to-white font-medium">
              <UsersIcon />
              角色及权限设置
              <CloseX />
            </button>
          </div>
          <div className="flex-1 flex gap-1.5">
            <RolePanel />
            <PermissionPanel />
          </div>
        </main>
      </div>

      <footer className="grid place-items-center h-[25px] pb-0.5 border border-[#99bbe8] text-xs font-medium text-[#15428b]">
        民生燃气商贸信息管理
      </footer>
    </div>
  );
}

/* ---------- status bar ---------- */

const cell = "flex items-center h-[18px] border border-t-[#808080] border-l-[#808080] border-r-white border-b-white";

function StatusBar() {
  return (
    <div className="flex items-start gap-0.5 h-[26px] pt-[3px] bg-[#d4d0c8] border-t border-white text-xs">
      <div className={clsx("flex-1", cell)} />
      <div className={clsx("w-[22px]", cell)} />
      <div className={clsx("w-[22px] justify-center", cell)}>
        <svg viewBox="0 0 14 12" className="w-[14px] h-3">
          <rect x=".5" y=".5" width="13" height="11" fill="#fff" stroke="#8d95a5" />
          <path d="M0 1h14v2H0z" fill="#a9b6cc" />
          <path d="M2 5h5M2 7h5M2 9h5" stroke="#aaa" />
          <path d="M10.500 3.500v4M10.500 9v2" stroke="#f08a12" strokeWidth="2" />
        </svg>
      </div>
      <div className={clsx("w-[22px]", cell)} />
      <div className={clsx("w-[22px]", cell)} />
      <div className={clsx("w-[22px]", cell)} />
      <div className={clsx("w-[22px]", cell)} />
      <div className={clsx("w-[158px] gap-1 pl-px", cell)}>
        <svg viewBox="0 0 16 16" className="w-4 h-4">
          <circle cx="8" cy="8" r="7.500" fill="#2c62c8" />
          <path d="M2 4c2-3 6-3 7-2 0 3-2 3-3 5s-4 1-5 0zM10 7c3-1 5 0 5 2s-3 6-5 5 0-3-1-4zM3 10c2 0 4 2 3 4-2 0-4-2-3-4z" fill="#4fc04a" />
          <ellipse cx="6" cy="4" rx="3" ry="2" fill="#fff" opacity=".4" />
        </svg>
        <Latin>Internet</Latin>
      </div>
      <button aria-label="protected mode" className={clsx("w-[35px] justify-between px-1", cell)}>
        <svg viewBox="0 0 16 14" className="w-4 h-[14px]">
          <path d="M1 9a6 6 0 0 1 11-5L7 9z" fill="#f4f4f4" stroke="#999" />
          <rect x="8" y="8" width="7" height="5.500" fill="#8b8b8b" />
          <path d="M9.500 8V5.500h4V8" fill="none" stroke="#777" strokeWidth="1.200" />
        </svg>
        <Caret />
      </button>
      <button className={clsx("w-[88px] pl-[5px]", cell)}>
        <svg viewBox="0 0 14 14" className="w-[14px] h-[14px] mr-0.5">
          <path d="M8 8l5 5" stroke="#8a6a3a" strokeWidth="2.500" />
          <circle cx="5.500" cy="5.500" r="4.800" fill="#d8ecff" stroke="#8aa6c8" />
          <path d="M5.500 3v5M3 5.500h5" stroke="#1a6fd8" strokeWidth="2" />
        </svg>
        <Latin>100%</Latin>
        <Caret className="ml-[14px] fill-black" />
        <svg viewBox="0 0 12 12" className="w-3 h-3 ml-auto self-end">
          <path d="M0 12L12 0M4 12l8-8M8 12l4-4" stroke="#808080" strokeWidth="1.500" />
        </svg>
      </button>
    </div>
  );
}

export default function App() {
  return (
    <div className="min-h-screen flex flex-col overflow-hidden font-['Liberation_Sans','Noto_Sans_CJK_SC',sans-serif] leading-4 text-black">
      <BrowserChrome />
      <div className="flex-1 flex flex-col border-t border-l-2 border-r-2 border-t-[#404040] border-l-[#505050] border-r-[#e8e6e2] bg-[linear-gradient(#bfdffb,#c4e2fc_60%,#f3f8fe_76%,#fff)]">
        <PortalHeader />
        <div className="flex-1 flex">
          <Dock />
          <AppWindow />
        </div>
        <div className="flex items-start justify-between h-[23px] pl-[3px] pr-[22px] bg-[#fdfeff]">
          <button className="flex items-center gap-0.5 w-[78px] h-[22px] pl-1 pb-0.5 bg-[#2793d1] text-[13px] font-bold text-white whitespace-nowrap">
            <FolderPie className="w-[15px] h-[15px] shrink-0" />
            商贸系统
          </button>
          <span className="font-['Lato',sans-serif] font-black text-[19px] leading-6 text-[#118bd0]">CORDYS</span>
        </div>
      </div>
      <StatusBar />
    </div>
  );
}
